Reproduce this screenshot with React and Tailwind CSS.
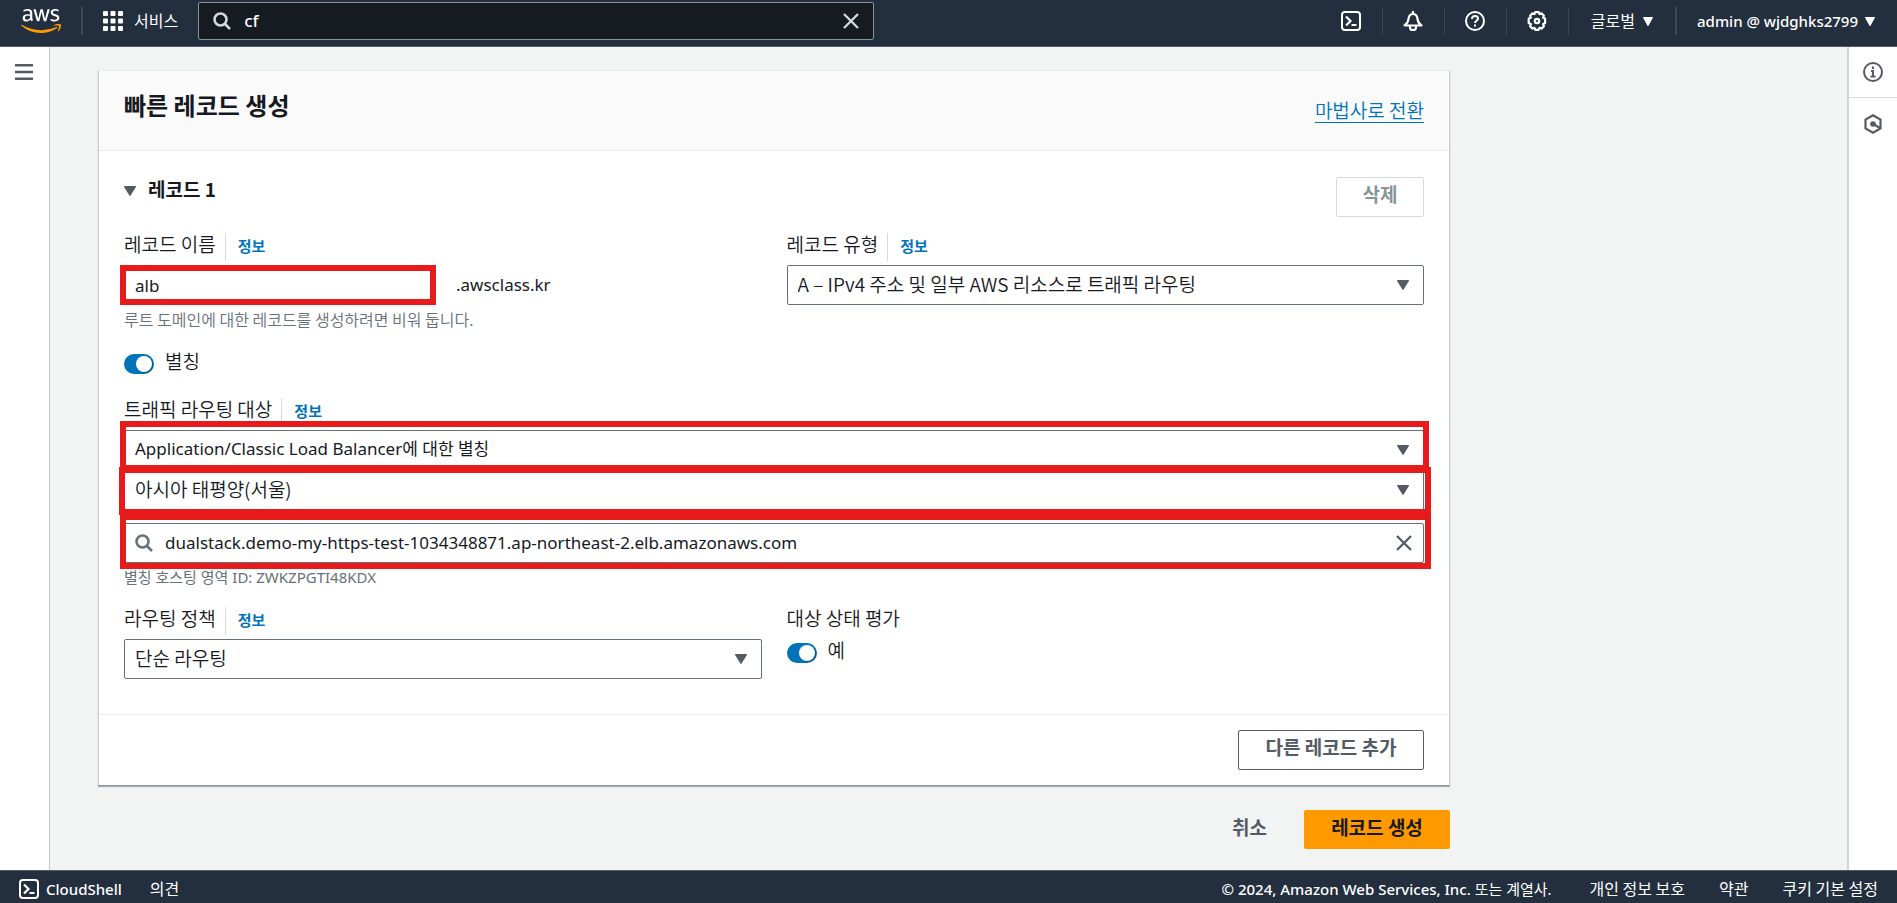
import React, { useState } from 'react';
import { FaAws } from 'react-icons/fa';

const NAV_ICONS = [
  { key: 'shell', label: 'CloudShell', icon: <ShellIcon /> },
  { key: 'bell', label: '알림', icon: <BellIcon /> },
  { key: 'help', label: '도움말', icon: <HelpIcon /> },
  { key: 'gear', label: '설정', icon: <GearIcon /> },
];

// mostly latin strings are set a little smaller than the korean ones
const LATIN = "font-['Noto_Sans','Noto_Sans_CJK_KR',sans-serif]";

function ShellIcon() {
  return (
    <svg width="20" height="20" viewBox="0 0 20 20" fill="none" stroke="currentColor" strokeWidth="2">
      <rect x="1" y="1" width="18" height="18" rx="3" />
      <path d="M5 5.500l4.500 4.500L5 14.500M10.500 14h5" strokeWidth="2.200" />
    </svg>
  );
}

function BellIcon() {
  return (
    <svg width="20" height="20" viewBox="0 0 20 20" fill="none" stroke="currentColor" strokeWidth="2.200" strokeLinejoin="round">
      <path d="M10 0v3M1.500 14.500h17c-3-2-3.700-4-4-6.500C14.200 5 12.600 3 10 3S5.800 5 5.500 8c-.3 2.500-1 4.500-4 6.500z" />
      <path d="M7 15v1.200a3 3 0 0 0 6 0V15" />
    </svg>
  );
}

function HelpIcon() {
  return (
    <svg width="20" height="20" viewBox="0 0 20 20" fill="none" stroke="currentColor" strokeWidth="2">
      <circle cx="10" cy="10" r="9" />
      <path d="M7 8c0-1.900 1.300-3 3-3s3 1.100 3 2.700c0 2-3 2.200-3 4.300" />
      <path d="M10 13.500v2" />
    </svg>
  );
}

function GearIcon() {
  return (
    <svg width="20" height="20" viewBox="0 0 20 20" fill="none" stroke="currentColor" strokeWidth="2.200" strokeLinejoin="round">
      <path d="M8.200 1.200h3.600l.7 1.900 2-.8 2.400 2.400-.8 2 2 .9v4.600l-2 .9.8 2.200-2.400 2.300-2-.8-.9 2H8.300l-.8-2-2 .8-2.400-2.300.8-2.200-2.200-.9V7.600l2.200-.9-.8-2 2.400-2.400 2 .8z" />
      <circle cx="10" cy="10" r="2.200" />
    </svg>
  );
}

function SearchIcon() {
  return (
    <svg width="18" height="18" viewBox="0 0 18 18" fill="none" stroke="currentColor" strokeWidth="2.500">
      <circle cx="7.500" cy="7.500" r="6" />
      <path d="M12 12l5 5" />
    </svg>
  );
}

function CloseIcon() {
  return (
    <svg width="16" height="16" viewBox="0 0 16 16" fill="none" stroke="currentColor" strokeWidth="2.300">
      <path d="M1 1l14 14M15 1L1 15" />
    </svg>
  );
}

function Caret({ width = 12, height = 10 }) {
  return (
    <svg width={width} height={height} viewBox="0 0 12 10" fill="currentColor" preserveAspectRatio="none">
      <path d="M.5 0h11c.5 0 .6.500.4.900L6.600 9.600c-.3.500-.9.500-1.200 0L.1.900C-.1.500 0 0 .5 0z" />
    </svg>
  );
}

function AwsLogo() {
  return (
    <a href="#home" aria-label="AWS" className="block">
      <svg width="0" height="0" className="absolute">
        <linearGradient id="aws-fill" gradientUnits="userSpaceOnUse" x1="0" y1="0" x2="0" y2="512">
          <stop offset="0.570" stopColor="#fff" />
          <stop offset="0.570" stopColor="#f90" />
        </linearGradient>
      </svg>
      <FaAws className="h-8 w-10" fill="url(#aws-fill)" stroke="none" />
    </a>
  );
}

function InfoLink() {
  return (
    <a href="#info" className="ml-[9px] border-l border-[#d5dbdb] pt-[3px] pb-[5px] pl-3 text-[15px] leading-5 font-bold text-[#0073bb]">정보</a>
  );
}

function Field({ id, label, info, children }) {
  return (
    <div className="min-w-0">
      <div className="mb-1 flex h-7 items-center">
        <label htmlFor={id} className="pb-1.5 font-[350]">{label}</label>
        {info && <InfoLink />}
      </div>
      {children}
    </div>
  );
}

function Select({ id, label, options, className = 'font-[350]' }) {
  return (
    <div className="relative">
      <select id={id} aria-label={label}
        className={`block h-10 w-full appearance-none rounded-xs border border-[#687078] bg-white px-[10px] pb-[3px] text-[#16191f] outline-none ${className}`}>
        {options.map(o => <option key={o}>{o}</option>)}
      </select>
      <span className="pointer-events-none absolute inset-y-0 right-[15px] flex items-center text-[#545b64]">
        <Caret />
      </span>
    </div>
  );
}

function Toggle({ id, label }) {
  const [on, setOn] = useState(true);
  return (
    <div className="flex h-7 items-center gap-[11px]">
      <span className="relative flex">
        <input id={id} type="checkbox" checked={on} onChange={e => setOn(e.target.checked)}
          className="peer h-5 w-[30px] appearance-none rounded-full bg-[#879596] checked:bg-[#0073bb]" />
        <span className="pointer-events-none absolute top-[2px] left-[2px] size-4 rounded-full bg-white shadow-[1px_1px_1px_rgba(0,0,0,0.3)] peer-checked:left-3" />
      </span>
      <label htmlFor={id} className="pb-1.5 font-[350]">{label}</label>
    </div>
  );
}

// red frame drawn over a control
function Mark({ className }) {
  return <span className={`pointer-events-none absolute z-10 border-[6px] border-[#e71b1b] ${className}`} />;
}

export default function App() {
  const [query, setQuery] = useState('cf');
  const [name, setName] = useState('alb');
  const [target, setTarget] = useState('dualstack.demo-my-https-test-1034348871.ap-northeast-2.elb.amazonaws.com');

  return (
    <div className="flex min-h-screen flex-col bg-[#f2f3f3] font-['Noto_Sans_CJK_KR',sans-serif] text-[19px] leading-6 text-[#16191f]">
      {/* Top navigation */}
      <header className="flex h-[47px] items-center border-b border-[#545b64] bg-[#232f3e] pb-1 text-[16px] text-white">
        <div className="pl-[21px]"><AwsLogo /></div>
        <span className="ml-5 h-7 w-[2px] bg-[#414750]" />
        <button className="ml-5 flex items-center gap-[11px]">
          <svg width="20" height="20" viewBox="0 0 20 20" fill="currentColor">
            {[0, 7.500, 15].map(y => [0, 7.500, 15].map(x => <rect key={`${x}-${y}`} x={x} y={y} width="5" height="5" rx="1" />))}
          </svg>
          <span className="pb-0.5">서비스</span>
        </button>
        <div className="ml-5 flex h-[38px] w-[676px] items-center rounded-xs border border-[#879596] bg-[#161a21] px-[14px] text-[#d5dbdb]">
          <SearchIcon />
          <input aria-label="검색" value={query} onChange={e => setQuery(e.target.value)}
            className={`min-w-0 flex-1 bg-transparent px-[13px] text-[17px] font-medium text-white outline-none ${LATIN}`} />
          <button aria-label="지우기" onClick={() => setQuery('')}><CloseIcon /></button>
        </div>
        <nav className="ml-auto flex items-center">
          {NAV_ICONS.map(n => (
            <span key={n.key} className="flex items-center">
              <button aria-label={n.label} className="pr-[21px] pl-5">{n.icon}</button>
              <span className="h-7 w-px bg-[#414750]" />
            </span>
          ))}
          <button className="flex items-center gap-2 px-[22px]"><span className="pb-0.5">글로벌</span> <Caret width={10} height={9} /></button>
          <span className="h-7 w-[2px] bg-[#414750]" />
          <button className={`flex items-center gap-[7px] pr-[22px] pl-5 text-[15px] font-medium ${LATIN}`}>admin @ wjdghks2799 <Caret width={10} height={9} /></button>
        </nav>
      </header>

      <div className="flex flex-1">
        <aside className="w-[50px] shrink-0 border-r border-[#c2c8c8] bg-white pt-[17px] pl-[15px] text-[#545b64]">
          <button aria-label="메뉴" className="block">
            <svg width="18" height="16" viewBox="0 0 18 16" fill="currentColor">
              <path d="M0 0h18v2.500H0zM0 6.700h18v2.500H0zM0 13.500h18V16H0z" />
            </svg>
          </button>
        </aside>

        <main className="min-w-0 flex-1 pt-[23px] pl-12">
          <div className="w-full max-w-[1352px]">
            <section className="border border-t-[#eaeded] border-r-[#c9cfcf] border-b-[#879596] border-l-[#c9cfcf] bg-white shadow-[0_1px_1px_rgba(0,28,36,0.3)]">
              <div className="flex h-20 items-center justify-between border-b border-[#eaeded] bg-[#fafafa] px-[25px]">
                <h2 className="pb-3 text-[24px] leading-7 font-bold">빠른 레코드 생성</h2>
                <a href="#wizard" className="border-b border-[#0073bb] leading-6 font-[350] text-[#0073bb]">마법사로 전환</a>
              </div>

              <div className="px-[25px] pt-[26px] pb-[35px]">
                <div className="mb-4 flex items-start justify-between">
                  <button className="flex items-center gap-3 font-bold">
                    <span className="text-[#545b64]"><Caret /></span>
                    <span className="pb-1">레코드 1</span>
                  </button>
                  <button disabled className="h-10 w-[88px] rounded-xs border border-[#d5dbdb] pb-1.5 font-bold text-[#879596]">삭제</button>
                </div>

                <div className="grid grid-cols-2 gap-x-[25px]">
                  <Field id="name" label="레코드 이름" info>
                    <div className="flex items-center gap-6">
                      <div className="relative">
                        <input id="name" value={name} onChange={e => setName(e.target.value)}
                          className={`block h-10 w-[308px] rounded-xs border border-[#687078] px-[10px] text-[17px] outline-none ${LATIN}`} />
                        <Mark className="-inset-x-1 inset-y-0" />
                      </div>
                      <span className={`text-[17px] ${LATIN}`}>.awsclass.kr</span>
                    </div>
                    <p className="mt-1 text-[16px] leading-5 font-[350] text-[#687078]">루트 도메인에 대한 레코드를 생성하려면 비워 둡니다.</p>
                  </Field>
                  <Field id="type" label="레코드 유형" info>
                    <Select id="type" options={['A – IPv4 주소 및 일부 AWS 리소스로 트래픽 라우팅']} />
                  </Field>
                </div>

                <div className="mt-[21px] mb-5"><Toggle id="alias" label="별칭" /></div>

                <Field id="target" label="트래픽 라우팅 대상" info>
                  <div className="relative">
                    <Select id="target" options={['Application/Classic Load Balancer에 대한 별칭']} className={`text-[17px] ${LATIN}`} />
                    <Mark className="-top-[9px] -right-[5px] -bottom-px -left-1" />
                  </div>
                  <div className="relative">
                    <Select label="리전" options={['아시아 태평양(서울)']} />
                    <Mark className="-top-[3px] -right-[7px] -bottom-[5px] -left-[5px]" />
                  </div>
                  <div className="relative mt-[13px] flex h-10 items-center rounded-xs border border-[#687078] pr-[11px] pl-[10px] text-[#687078]">
                    <SearchIcon />
                    <input aria-label="로드 밸런서" value={target} onChange={e => setTarget(e.target.value)}
                      className={`min-w-0 flex-1 bg-transparent px-3 text-[17px] text-[#16191f] outline-none ${LATIN}`} />
                    <button aria-label="지우기" className="text-[#545b64]" onClick={() => setTarget('')}><CloseIcon /></button>
                    <Mark className="-top-[10px] -right-[8px] -bottom-[7px] -left-[5px]" />
                  </div>
                  <p className={`mt-1 text-[15px] leading-5 text-[#687078] ${LATIN}`}>별칭 호스팅 영역 ID: ZWKZPGTI48KDX</p>
                </Field>

                <div className="mt-5 grid grid-cols-2 gap-x-[25px]">
                  <Field id="policy" label="라우팅 정책" info>
                    <Select id="policy" options={['단순 라우팅']} />
                  </Field>
                  <Field id="health" label="대상 상태 평가">
                    <Toggle id="health" label="예" />
                  </Field>
                </div>
              </div>

              <div className="flex justify-end border-t border-[#eaeded] px-[25px] py-[15px]">
                <button className="h-10 w-[186px] rounded-xs border border-[#545b64] pb-1.5 font-bold text-[#545b64]">다른 레코드 추가</button>
              </div>
            </section>

            <div className="mt-6 flex justify-end gap-[37px]">
              <button className="pb-1.5 font-bold text-[#545b64]">취소</button>
              <button className="h-[39px] w-[146px] rounded-xs bg-[#ff9900] pb-1.5 font-bold">레코드 생성</button>
            </div>
          </div>
        </main>

        <aside className="w-[50px] shrink-0 border-l-2 border-[#d0d5d5] bg-white text-[#545b64]">
          <button aria-label="정보" className="flex h-[51px] w-full items-center justify-center border-b border-[#d5dbdb]">
            <svg width="20" height="20" viewBox="0 0 20 20" fill="none" stroke="currentColor" strokeWidth="2">
              <circle cx="10" cy="10" r="9" />
              <path d="M10 4.500v2.500M8 9h2v5M7.500 14.500h5" />
            </svg>
          </button>
          <button aria-label="자습서" className="flex h-[51px] w-full items-center justify-center">
            <svg width="20" height="20" viewBox="0 0 20 20" fill="none" stroke="currentColor" strokeWidth="2.200">
              <path d="M10 1.300l7.500 4.300v8.800L10 18.700l-7.500-4.300V5.600z" />
              <circle cx="10" cy="10" r="2.800" fill="currentColor" stroke="none" />
              <path d="M10 10l7.500 4.300" />
            </svg>
          </button>
        </aside>
      </div>

      <footer className="flex h-[33px] items-center border-t border-[#545b64] bg-[#232f3e] px-[19px] pt-[3px] text-[16px] text-white">
        <button className={`flex items-center gap-[7px] text-[15px] font-medium ${LATIN}`}><ShellIcon /> CloudShell</button>
        <a href="#feedback" className="ml-7 pb-0.5">의견</a>
        <span className={`ml-auto text-[15px] font-medium ${LATIN}`}>
          © 2024, Amazon Web Services, Inc. <span className="font-normal">또는 계열사.</span>
        </span>
        <a href="#privacy" className="ml-[38px] pb-0.5">개인 정보 보호</a>
        <a href="#terms" className="ml-[34px] pb-0.5">약관</a>
        <a href="#cookies" className="ml-[34px] pb-0.5">쿠키 기본 설정</a>
      </footer>
    </div>
  );
}
